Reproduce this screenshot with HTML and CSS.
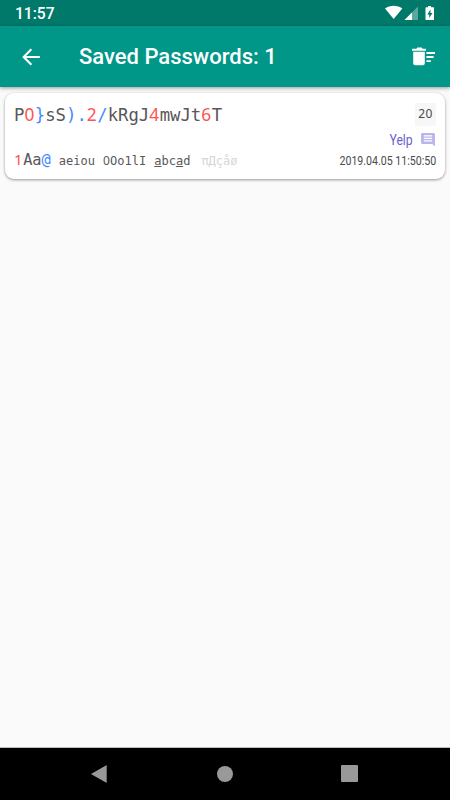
FILE: index.html
```html
<!DOCTYPE html>
<html lang="en">

<head>
    <meta charset="UTF-8">
    <meta name="viewport" content="width=device-width, initial-scale=1.0">
    <link rel="stylesheet" href="styles.css">
    <title>Saved Passwords</title>
</head>

<body>
    <div class="screen">
        <div class="statusBar">
            <span class="clock">11:57</span>
            <svg class="statusIcons" width="50" height="16" viewBox="0 0 50 16">
                <path d="M0 3.4C5 -.1 12.5 -.1 17.3 3.4L8.7 14z" fill="#fff"/>
                <path d="M33 1.5V15H19.5z" fill="#fff" opacity=".35"/>
                <path d="M27 7.5V15H19.5z" fill="#fff"/>
                <path d="M43 1h3v1.3h2.3q.7 0 .7.7v11.4q0 .7-.7.7h-7.1q-.7 0-.7-.7V3q0-.7.7-.7H43z" fill="#fff"/>
                <path d="M45.5 4.5l-3.2 5h2V13l3.2-5h-2z" fill="#00796b"/>
            </svg>
        </div>
        <div class="toolbar">
            <svg class="back" width="24" height="24" viewBox="0 0 24 24">
                <path d="M20.8 11v2H7.1l6 6-1.5 1.4L3.2 12l8.4-8.4L13.1 5l-6 6z" fill="#fff"/>
            </svg>
            <h1 class="title">Saved Passwords: 1</h1>
            <svg class="clear" width="24" height="20" viewBox="0 0 24 20">
                <path d="M0 1.7h4.4L5.4.5h4.2l1 1.2H14v2H0zM1.2 4.8h11.6v11.4q0 2-2 2H3.2q-2 0-2-2zM14.4 5.1H23v1.9h-8.6zM14.4 9.1h7.2V11h-7.2zM14.4 13.2h4.4v1.9h-4.4z" fill="#fff"/>
            </svg>
        </div>
        <div class="list">
            <div class="card">
                <div class="row rowTop">
                    <div class="password">P<span class="digit">0</span><span class="symbol">}</span>sS<span class="symbol">).</span><span class="digit">2</span><span class="symbol">/</span>kRgJ<span class="digit">4</span>mwJt<span class="digit">6</span>T</div>
                    <div class="length">20</div>
                </div>
                <div class="row rowNote">
                    <span class="note">Yelp</span>
                    <svg width="14" height="14" viewBox="0 0 14 14">
                        <path d="M1.4 0h11.2Q14 0 14 1.4V13.6L11.2 11H1.4Q0 11 0 9.6V1.4Q0 0 1.4 0z" fill="#b9b5ed"/>
                        <path d="M2.8 2.8h8.4M2.8 5.3h8.4M2.8 7.8h8.4" stroke="#fff" stroke-width="1.2"/>
                    </svg>
                </div>
                <div class="row rowBottom">
                    <div class="flags">
                        <span class="types"><span class="digit">1</span>Aa<span class="symbol">@</span></span>
                        <span class="flag">aeiou</span>
                        <span class="flag"><span class="zero">0</span>Oo1lI</span>
                        <span class="flag"><u>a</u>bc<u>a</u>d</span>
                        <span class="flag off">πДçåø</span>
                    </div>
                    <span class="date">2019.04.05 11:50:50</span>
                </div>
            </div>
        </div>
        <div class="navBar">
            <svg width="16" height="18" viewBox="0 0 16 18">
                <path d="M15.7 .4v17.2q0 .4-.4.2L.4 9.3q-.4-.3 0-.6L15.3.2q.4-.2.4.2z" fill="#999"/>
            </svg>
            <span class="home"></span>
            <span class="recent"></span>
        </div>
    </div>
</body>

</html>
```
FILE: styles.css
```css
* {
    padding: 0;
    margin: 0;
    box-sizing: border-box;
}

body {
    font-family: Roboto, "Liberation Sans", sans-serif;
    background: #fafafa;
}

.screen {
    display: flex;
    flex-direction: column;
    width: 450px;
    height: 800px;
    overflow: hidden;
}

.statusBar {
    display: flex;
    justify-content: space-between;
    height: 26px;
    padding: 5px 15px 0 15px;
    background: #00796b;
    color: #fff;
}

.clock {
    font-size: 15.6px;
    line-height: 19px;
    font-weight: 500;
}

.toolbar {
    position: relative;
    display: flex;
    align-items: center;
    height: 61px;
    padding: 0 14px 0 19px;
    background: #009688;
    color: #fff;
    box-shadow: 0 1px 4px rgba(0, 0, 0, 0.4);
}

.title {
    flex: 1;
    margin-left: 36px;
    padding-top: 1px;
    font-size: 22px;
    line-height: 28px;
    font-weight: 500;
}

.list {
    flex: 1;
    padding: 6px 5px 0;
}

.card {
    height: 86px;
    padding: 9px 9px 0;
    border-radius: 9px;
    background: #fff;
    box-shadow: 0 1px 3px rgba(0, 0, 0, 0.4);
}

.row {
    display: flex;
    align-items: center;
}

.rowTop {
    justify-content: space-between;
    height: 24px;
}

.password {
    padding-top: 1px;
    font-family: "DejaVu Sans Mono", monospace;
    font-size: 17.3px;
    line-height: 24px;
    color: #585858;
    white-space: nowrap;
}

.digit {
    font-family: "Noto Sans", sans-serif;
    color: #ff5252;
}

.password .digit {
    font-size: 17.3px;
    line-height: 1;
    letter-spacing: 0.5px;
}

.symbol {
    color: #448aff;
}

.length {
    width: 21px;
    height: 23px;
    background: #f7f7f7;
    font-family: "Noto Sans", sans-serif;
    font-size: 12px;
    line-height: 22px;
    letter-spacing: 0.3px;
    text-align: center;
    color: #4a4a4a;
}

.rowNote {
    justify-content: flex-end;
    gap: 8px;
    height: 28px;
    padding-right: 1px;
}

/* condensed look for the right column */
.note,
.date {
    transform: scaleX(0.87);
    transform-origin: right center;
}

.note {
    font-size: 14px;
    line-height: 18px;
    color: #6a62cc;
}

.rowBottom {
    justify-content: space-between;
    height: 14px;
}

.flags {
    display: flex;
    align-items: baseline;
    gap: 8px;
    margin-top: -5px;
    font-family: "DejaVu Sans Mono", monospace;
    color: #585858;
    white-space: nowrap;
}

.types {
    font-size: 15.3px;
}

.types .digit {
    letter-spacing: 0.4px;
}

.flag {
    font-size: 12px;
}

.zero {
    letter-spacing: 0.3px;
    font-family: "Noto Sans", sans-serif;
}

.off {
    margin-left: 3px;
    color: #d6d6d6;
}

.date {
    font-size: 12.2px;
    color: #4a4a4a;
    white-space: nowrap;
}

.navBar {
    display: flex;
    align-items: center;
    height: 53px;
    padding: 0 92px 1px 91px;
    justify-content: space-between;
    border-top: 1px solid #bbb;
    background: #000;
}

.home {
    margin-left: 1px;
    width: 16px;
    height: 16px;
    border-radius: 50%;
    background: #999;
}

.recent {
    width: 17px;
    height: 17px;
    border-radius: 1px;
    background: #999;
}
```
